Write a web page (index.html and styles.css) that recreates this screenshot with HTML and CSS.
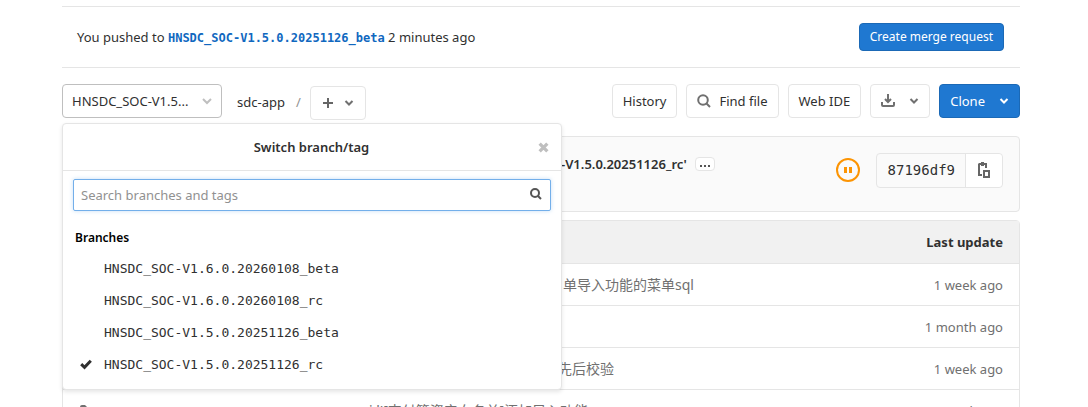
FILE: index.html
```html
<!DOCTYPE html>
<html lang="en">
<head>
  <meta charset="UTF-8" />
  <title>sdc-app</title>
  <link rel="stylesheet" href="styles.css">
</head>
<body>

  <div class="container">

    <div class="last-push">
      <div>
        You pushed to <a class="ref-name" href="#">HNSDC_SOC-V1.5.0.20251126_beta</a> 2 minutes ago
      </div>
      <button class="btn btn-primary btn-small">Create merge request</button>
    </div>

    <div class="toolbar">
      <div class="ref-holder">
        <button class="btn ref-toggle">
          <span>HNSDC_SOC-V1.5...</span>
          <svg class="chevron" viewBox="0 0 10 10"><path d="M1 3 5 7 9 3" /></svg>
        </button>

        <div class="dropdown-menu">
          <div class="dropdown-title">
            <span>Switch branch/tag</span>
            <button class="close" aria-label="Close">
              <svg viewBox="0 0 10 10"><path d="M1.500 1.500 8.500 8.500M8.500 1.500 1.500 8.500" /></svg>
            </button>
          </div>
          <div class="dropdown-input">
            <input type="text" id="search" aria-label="Search branches and tags" placeholder="Search branches and tags" />
            <svg class="search-icon" viewBox="0 0 14 14"><circle cx="6" cy="6" r="4" /><path d="M9 9 12 12" /></svg>
          </div>
          <div class="dropdown-header">Branches</div>
          <ul class="branches">
            <li><a href="#">HNSDC_SOC-V1.6.0.20260108_beta</a></li>
            <li><a href="#">HNSDC_SOC-V1.6.0.20260108_rc</a></li>
            <li><a href="#">HNSDC_SOC-V1.5.0.20251126_beta</a></li>
            <li>
              <a href="#">
                <svg class="check" viewBox="0 0 12 12"><path d="M1.200 5.200 4.500 8.300 10.800 1.800" /></svg>
                HNSDC_SOC-V1.5.0.20251126_rc
              </a>
            </li>
          </ul>
        </div>
      </div>

      <div class="breadcrumb">
        <a href="#">sdc-app</a>
        <span class="slash">/</span>
        <button class="btn add" aria-label="Add">
          <svg class="plus" viewBox="0 0 12 12"><path d="M6 1V11M1 6H11" /></svg>
          <svg class="chevron" viewBox="0 0 10 10"><path d="M1.500 3 5 6.500 8.500 3" /></svg>
        </button>
      </div>

      <div class="actions">
        <button class="btn">History</button>
        <button class="btn find">
          <svg class="find-icon" viewBox="0 0 14 14"><circle cx="6" cy="6" r="4.800" /><path d="M9.500 9.500 13 13" /></svg>
          Find file
        </button>
        <button class="btn">Web IDE</button>
        <button class="btn download" aria-label="Download">
          <svg class="download-icon" viewBox="0 0 14 14"><path d="M1 8V11Q1 12 2 12H12Q13 12 13 11V8M7 0V8M4 5 7 8 10 5" /></svg>
          <svg class="chevron" viewBox="0 0 10 10"><path d="M1.500 3 5 6.500 8.500 3" /></svg>
        </button>
        <button class="btn btn-primary clone">
          Clone
          <svg class="chevron" viewBox="0 0 10 10"><path d="M1.500 3 5 6.500 8.500 3" /></svg>
        </button>
      </div>
    </div>

    <div class="commit">
      <div class="commit-title">
        <a href="#">-V1.5.0.20251126_rc'</a>
        <button class="expander" aria-label="Toggle description">
          <svg viewBox="0 0 10 2"><path d="M0 0H2V2H0ZM4 0H6V2H4ZM8 0H10V2H8Z" /></svg>
        </button>
      </div>
      <a class="pipeline" href="#" aria-label="Pipeline pending">
        <svg viewBox="0 0 24 24"><circle cx="12" cy="12" r="11" /><path d="M8 9H11V15H8ZM13 9H16V15H13Z" /></svg>
      </a>
      <div class="sha">
        <span>87196df9</span>
        <button class="copy" aria-label="Copy commit SHA">
          <svg viewBox="0 0 14 16"><path class="board" d="M4 0H7V1H10V6H8V3H7V4H4V3H3V12H5V14H1V2L2 1H4Z" /><path d="M7 9H12V15H7Z" /></svg>
        </button>
      </div>
    </div>

    <table class="tree">
      <thead>
        <tr><th class="name"></th><th class="message"></th><th class="time">Last update</th></tr>
      </thead>
      <tbody>
        <tr><td></td><td class="message covered">单导入功能的菜单sql</td><td class="time">1 week ago</td></tr>
        <tr><td></td><td></td><td class="time">1 month ago</td></tr>
        <tr><td></td><td class="message clipped">先后校验</td><td class="time">1 week ago</td></tr>
        <tr>
          <td class="name"><svg class="folder" viewBox="0 0 14 12"><path d="M0 2Q0 0 2 0H5L7 2H12Q14 2 14 4V10Q14 12 12 12H2Q0 12 0 10Z" /></svg></td>
          <td class="message">i·l'[支付管资产白名单]添加导入功能</td>
          <td class="time">1 week ago</td>
        </tr>
      </tbody>
    </table>

  </div>

</body>
</html>
```

FILE: styles.css
```css
* {
  box-sizing: border-box;
}

body {
  font-family: "Noto Sans", "Noto Sans CJK SC", sans-serif;
  font-size: 13px;
  line-height: 20px;
  margin: 0;
  height: 100vh;
  overflow: hidden;
  color: #303030;
  background-color: #fff;
}

a {
  color: inherit;
  text-decoration: none;
}

svg {
  display: block;
  fill: none;
  stroke: currentColor;
  stroke-width: 2;
}

.container {
  padding: 6px 68px 0 62px;
}

.last-push {
  display: flex;
  align-items: center;
  justify-content: space-between;
  height: 62px;
  padding: 0 16px 0 15px;
  border-top: 1px solid #e5e5e5;
  border-bottom: 1px solid #e5e5e5;
}

.ref-name {
  font-family: "DejaVu Sans Mono", monospace;
  font-size: 12px;
  font-weight: bold;
  color: #1068bf;
}

.btn {
  display: flex;
  align-items: center;
  height: 34px;
  padding: 0 10px;
  font: inherit;
  color: #303030;
  background-color: #fff;
  border: 1px solid #e5e5e5;
  border-radius: 4px;
  cursor: pointer;
}

.btn-primary {
  color: #fff;
  background-color: #1f78d1;
  border-color: #1b69b6;
}

.btn-small {
  height: 28px;
  font-size: 12px;
}

.chevron {
  width: 10px;
  height: 10px;
  color: #707070;
}

.btn-primary .chevron {
  color: #fff;
}

.toolbar {
  display: flex;
  align-items: flex-start;
  margin-top: 16px;
}

.ref-holder {
  position: relative;
}

.ref-toggle {
  justify-content: space-between;
  width: 160px;
  padding: 0 9px;
  border-color: #bfbfbf;
}

.ref-toggle .chevron {
  color: #bfbfbf;
}

.dropdown-menu {
  position: absolute;
  top: 39px;
  left: 0;
  z-index: 10;
  width: 500px;
  padding-bottom: 8px;
  background-color: #fff;
  border: 1px solid #e5e5e5;
  border-radius: 4px;
  box-shadow: 0 2px 4px rgba(0, 0, 0, 0.1);
}

.dropdown-title {
  display: flex;
  align-items: center;
  height: 47px;
  padding: 0 12px;
  font-weight: 600;
  border-bottom: 1px solid #e5e5e5;
}

.dropdown-title span {
  flex-grow: 1;
  padding-left: 10px;
  text-align: center;
}

.close {
  padding: 0;
  color: #bfbfbf;
  background: none;
  border: none;
}

.close svg {
  width: 11px;
  height: 11px;
  stroke-width: 3;
}

.dropdown-input {
  position: relative;
  padding: 8px 10px 0;
}

.dropdown-input input {
  display: block;
  width: 100%;
  height: 32px;
  padding: 0 30px 0 7px;
  font: inherit;
  border: 1px solid #73afea;
  border-radius: 2px;
  outline: none;
  box-shadow: 0 0 4px rgba(115, 175, 234, 0.4);
}

.dropdown-input input::placeholder {
  color: #919191;
}

.search-icon {
  position: absolute;
  top: 16px;
  right: 18px;
  width: 14px;
  height: 14px;
  color: #555;
}

.dropdown-header {
  margin-top: 17px;
  padding: 0 12px;
  font-size: 12px;
  font-weight: 600;
  color: #000;
}

.branches {
  margin: 5px 0 0;
  padding: 0;
  list-style: none;
}

.branches a {
  display: flex;
  align-items: center;
  justify-content: flex-start;
  height: 32px;
  padding-left: 41px;
  font-family: "DejaVu Sans Mono", monospace;
}

.check {
  width: 12px;
  height: 12px;
  margin-left: -24px;
  margin-right: 12px;
  stroke-width: 3;
}

.breadcrumb {
  display: flex;
  align-items: center;
  margin-left: 15px;
}

.slash {
  margin: 0 9px 0 11px;
  color: #919191;
}

.add {
  gap: 10px;
  margin-top: 2px;
  padding: 0 11px;
}

.plus {
  width: 12px;
  height: 12px;
  color: #666;
}

.actions {
  display: flex;
  gap: 9px;
  margin-left: auto;
}

.find {
  gap: 8px;
}

.find-icon,
.download-icon {
  width: 14px;
  height: 14px;
  color: #707070;
}

.download,
.clone {
  gap: 14px;
}

.commit {
  display: flex;
  align-items: center;
  height: 76px;
  margin-top: 16px;
  padding: 0 16px 8px 498px;
  background-color: #fafafa;
  border: 1px solid #e5e5e5;
  border-radius: 4px;
}

.commit-title {
  display: flex;
  align-items: center;
  flex-grow: 1;
  gap: 8px;
  height: 32px;
  padding-bottom: 12px;
  font-weight: 600;
}

.expander {
  padding: 7px 4px 3px;
  background-color: #fff;
  border: 1px solid #e5e5e5;
  border-radius: 4px;
}

.expander svg {
  width: 10px;
  height: 2px;
  fill: #555;
  stroke: none;
}

.pipeline {
  margin-right: 16px;
  color: #fc9403;
}

.pipeline svg {
  width: 24px;
  height: 24px;
}

.pipeline path {
  fill: currentColor;
  stroke: none;
}

.sha {
  display: flex;
  align-items: center;
  height: 35px;
  font-family: "DejaVu Sans Mono", monospace;
  font-size: 14px;
  border: 1px solid #e5e5e5;
  border-radius: 4px;
}

.sha span {
  padding: 0 10px 0 11px;
}

.copy {
  height: 100%;
  padding: 0 11px;
  color: #666;
  background-color: #fff;
  border: none;
  border-left: 1px solid #e5e5e5;
  border-radius: 0 4px 4px 0;
}

.copy svg {
  width: 14px;
  height: 16px;
}

.copy .board {
  fill: currentColor;
  stroke: none;
}

.tree {
  width: 100%;
  margin-top: 8px;
  table-layout: fixed;
  border: 1px solid #e5e5e5;
  border-radius: 4px 4px 0 0;
  border-spacing: 0;
}

.tree th {
  height: 43px;
  background-color: #f1f1f1;
}

.tree th,
.tree td {
  padding: 0 16px;
  text-align: left;
  border-bottom: 1px solid #e5e5e5;
}

.tree td {
  height: 42px;
  color: #707070;
  white-space: nowrap;
}

.tree .name {
  width: 290px;
}

.tree .message {
  font-size: 14px;
}

.tree .covered {
  padding-left: 210px;
}

.tree .clipped {
  padding-left: 205px;
}

.tree .time {
  width: 140px;
  text-align: right;
}

.folder {
  width: 14px;
  height: 12px;
  margin-left: 1px;
  fill: #707070;
  stroke: none;
}
```
